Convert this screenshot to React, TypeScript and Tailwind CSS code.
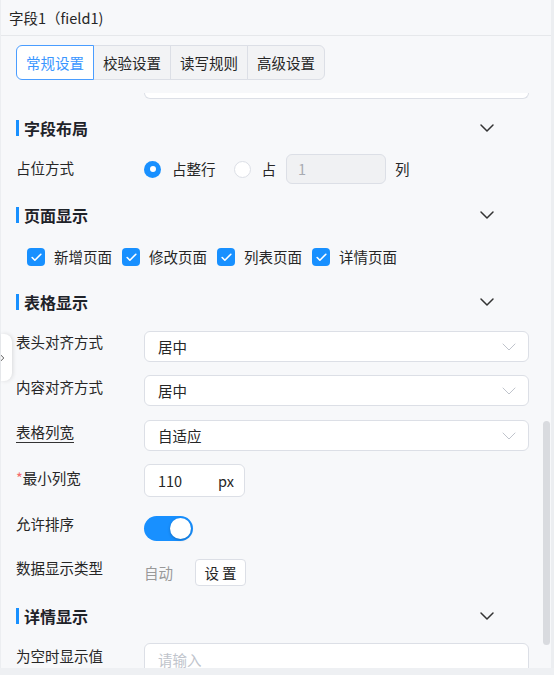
import { Check, ChevronDown, ChevronRight } from "lucide-react";
import type { ReactNode } from "react";

const font = { fontFamily: '"Noto Sans CJK SC", "Noto Sans", sans-serif' };

const tabs = ["常规设置", "校验设置", "读写规则", "高级设置"];
const pages = ["新增页面", "修改页面", "列表页面", "详情页面"];

const SectionTitle = ({ title, className }: { title: string; className: string }) => (
  <div className={`flex h-[30px] items-center ${className}`}>
    <span className="h-[16px] w-[3px] bg-[#1890ff]" />
    <span className="ml-[5px] text-[16px] font-bold text-[#1f2329]">{title}</span>
    <ChevronDown size={24} strokeWidth={1.5} className="ml-auto mr-[30px] text-[#333]" />
  </div>
);

const Row = ({
  label,
  pad,
  className,
  children,
}: {
  label: ReactNode;
  pad: string;
  className: string;
  children: ReactNode;
}) => (
  <div className={`flex items-start ${className}`}>
    <div className={`w-[128px] shrink-0 text-[14.5px] leading-[16px] text-[#262626] ${pad}`}>{label}</div>
    <div className="flex min-w-0 flex-1 items-center">{children}</div>
  </div>
);

const Select = ({ value }: { value: string }) => (
  <div className="flex h-[31px] w-full items-center rounded-[6px] border border-[#dcdfe6] bg-white pl-[13px] pr-[7px]">
    <span className="text-[14.5px] text-[#262626]">{value}</span>
    <ChevronDown size={24} strokeWidth={1} className="ml-auto text-[#c0c4cc]" />
  </div>
);

const Box = ({ label, className }: { label: string; className: string }) => (
  <div className={`flex items-center ${className}`}>
    <span className="flex h-[18px] w-[18px] items-center justify-center rounded-[4px] bg-[#1890ff]">
      <Check size={13} strokeWidth={3} className="text-white" />
    </span>
    <span className="ml-[9px] text-[14.5px] text-[#262626]">{label}</span>
  </div>
);

export default function App() {
  return (
    <div style={font} className="flex h-[675px] w-[554px] flex-col bg-[#eef0f3]">
      <div className="flex h-[668px]">
        <div className="relative flex w-[551px] flex-col border-l border-[#eceef1] bg-[#f7f8fa]">
          {/* header */}
          <div className="flex h-[36px] items-center border-b border-[#e6e8eb] pl-[8px] text-[14.5px] text-[#262626]">
            字段1（field1)
          </div>

          {/* tabs */}
          <div className="ml-[15px] mt-[9px] flex">
            {tabs.map((t, i) => (
              <div
                key={t}
                className={`flex h-[35px] items-center justify-center border text-[14.5px] ${
                  i === 0
                    ? "relative z-10 w-[78px] rounded-l-[6px] border-[#4a9dff] bg-white text-[#3a96ff]"
                    : "-ml-px w-[78px] border-[#dcdfe6] bg-[#f2f3f5] text-[#262626]"
                } ${i === tabs.length - 1 ? "rounded-r-[6px]" : ""}`}
              >
                {t}
              </div>
            ))}
          </div>

          {/* scroll area */}
          <div className="relative mt-[13px] flex-1 overflow-hidden pl-[15px] pr-[22px]">
            <div className="ml-[128px] h-[6px] rounded-b-[6px] border-x border-b border-[#dcdfe6] bg-white" />

            <SectionTitle title="字段布局" className="mt-[14px]" />
            <Row label="占位方式" pad="pt-[6px]" className="mt-[11px] h-[30px]">
              <div className="flex h-[30px] items-center">
                <span className="flex h-[17px] w-[17px] items-center justify-center rounded-full bg-[#1890ff]">
                  <span className="h-[6px] w-[6px] rounded-full bg-white" />
                </span>
                <span className="ml-[11px] text-[14.5px] text-[#262626]">占整行</span>
                <span className="ml-[18px] h-[17px] w-[17px] rounded-full border border-[#dcdfe6] bg-white" />
                <span className="ml-[11px] text-[14.5px] text-[#262626]">占</span>
                <div className="ml-[10px] flex h-[30px] w-[100px] items-center rounded-[6px] border border-[#dcdfe6] bg-[#f0f1f3] pl-[11px] text-[14.5px] text-[#a8abb2]">
                  1
                </div>
                <span className="ml-[9px] text-[14.5px] text-[#262626]">列</span>
              </div>
            </Row>

            <SectionTitle title="页面显示" className="mt-[16px]" />
            <div className="mt-[17px] flex h-[20px] items-center pl-[11px]">
              {pages.map((p, i) => (
                <Box key={p} label={p} className={i === 0 ? "" : "ml-[10px]"} />
              ))}
            </div>

            <SectionTitle title="表格显示" className="mt-[20px]" />
            <Row label="表头对齐方式" pad="pt-[3px]" className="mt-[14px]">
              <Select value="居中" />
            </Row>
            <Row label="内容对齐方式" pad="pt-[4px]" className="mt-[13px]">
              <Select value="居中" />
            </Row>
            <Row
              label={<span className="underline decoration-[#333] underline-offset-[4px]">表格列宽</span>}
              pad="pt-[4px]"
              className="mt-[14px]"
            >
              <Select value="自适应" />
            </Row>
            <Row
              label={
                <>
                  <span className="text-[#f56c6c]">*</span>最小列宽
                </>
              }
              pad="pt-[6px]"
              className="mt-[13px]"
            >
              <div className="flex h-[33px] w-[101px] items-center rounded-[6px] border border-[#dcdfe6] bg-white pl-[13px] pr-[10px] text-[14.5px] text-[#262626]">
                <span>110</span>
                <span className="ml-auto">px</span>
              </div>
            </Row>
            <Row label="允许排序" pad="pt-0" className="mt-[19px]">
              <div className="flex h-[25px] w-[49px] items-center justify-end rounded-full bg-[#1890ff] pr-[2px]">
                <span className="h-[21px] w-[21px] rounded-full bg-white shadow-[0_1px_3px_rgba(0,0,0,0.25)]" />
              </div>
            </Row>
            <Row label="数据显示类型" pad="pt-[1px]" className="mt-[18px]">
              <span className="text-[14.5px] text-[#999]">自动</span>
              <button className="ml-[22px] flex h-[27px] w-[51px] items-center justify-center rounded-[4px] border border-[#dcdfe6] bg-white text-[14.5px] text-[#262626]">
                设 置
              </button>
            </Row>

            <SectionTitle title="详情显示" className="mt-[15px]" />
            <Row label="为空时显示值" pad="pt-[5px]" className="mt-[12px]">
              <div className="flex h-[33px] w-full items-center rounded-[6px] border border-[#dcdfe6] bg-white pl-[13px] text-[14.5px] text-[#c0c4cc]">
                请输入
              </div>
            </Row>

            {/* scrollbar thumb */}
            <div className="absolute right-px top-[328px] h-[224px] w-[7px] rounded-full bg-[#d9dbdf]" />
          </div>

          {/* collapse handle */}
          <div className="absolute left-0 top-[334px] flex h-[47px] w-[11px] items-center overflow-hidden rounded-r-[8px] bg-white shadow-[1px_0_4px_rgba(0,0,0,0.12)]">
            <ChevronRight size={14} strokeWidth={1.5} className="-ml-[6px] shrink-0 text-[#444]" />
          </div>
        </div>
        <div className="w-[3px] bg-[#eceef1]" />
      </div>
    </div>
  );
}
